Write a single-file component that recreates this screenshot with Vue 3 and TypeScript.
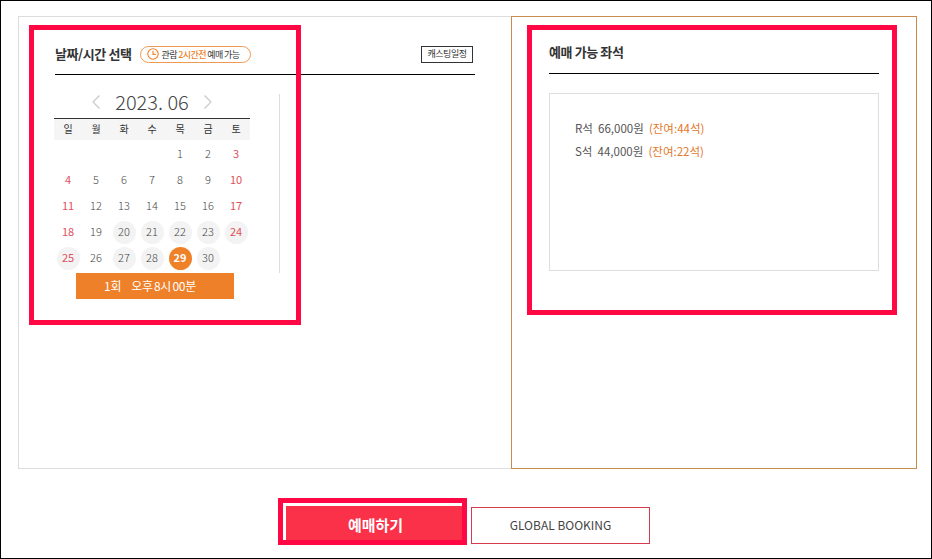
<script setup lang="ts">
interface DayCell {
  id: number
  label: string
  weekend: boolean
  open: boolean
  selected: boolean
}

const weekdays = ['일', '월', '화', '수', '목', '금', '토']
const openDays = [20, 21, 22, 23, 24, 25, 27, 28, 30]
const selectedDay = 29

// June 2023 starts on a Thursday
const days: DayCell[] = Array.from({ length: 35 }, (_, index) => {
  const day = index - 3
  const valid = day >= 1 && day <= 30
  return {
    id: index,
    label: valid ? String(day) : '',
    weekend: index % 7 === 0 || index % 7 === 6,
    open: openDays.includes(day),
    selected: day === selectedDay,
  }
})

const seats = [
  { name: 'R석', price: '66,000원', left: '(잔여:44석)' },
  { name: 'S석', price: '44,000원', left: '(잔여:22석)' },
]
</script>

<template>
  <div class="page">
    <div class="panels">
      <section class="panel-date">
        <header class="section-head">
          <h2>날짜/시간 선택</h2>
          <span class="notice">
            <svg width="12" height="12" viewBox="0 0 12 12" fill="none" stroke="#ef8129">
              <circle cx="6" cy="6" r="5.2" stroke-width="1.1" />
              <path d="M6 2.8V6.4H8.8" stroke-width="1.1" />
            </svg>
            <span>관람 <b>2시간전</b> 예매 가능</span>
          </span>
          <span class="cast-btn">캐스팅일정</span>
        </header>

        <div class="date-body">
          <div class="calendar">
            <div class="month-nav">
              <svg width="10" height="16" viewBox="0 0 10 16" fill="none" stroke="#c9c9c9" stroke-width="1.2">
                <path d="M8.5 1.5L2 8L8.5 14.5" />
              </svg>
              <span class="month">2023. 06</span>
              <svg width="10" height="16" viewBox="0 0 10 16" fill="none" stroke="#c9c9c9" stroke-width="1.2">
                <path d="M1.5 1.5L8 8L1.5 14.5" />
              </svg>
            </div>
            <div class="weekdays">
              <span v-for="name in weekdays" :key="name">{{ name }}</span>
            </div>
            <div class="days">
              <div v-for="cell in days" :key="cell.id" class="day">
                <span
                  v-if="cell.label"
                  class="day-num"
                  :class="{ weekend: cell.weekend, open: cell.open, selected: cell.selected }"
                >{{ cell.label }}</span>
              </div>
            </div>
          </div>
          <div class="divider"></div>
        </div>

        <div class="time-bar">
          <span>1회</span>
          <span>오후 8시 00분</span>
        </div>
      </section>

      <section class="panel-seat">
        <header class="section-head">
          <h2>예매 가능 좌석</h2>
        </header>
        <div class="seat-box">
          <p v-for="seat in seats" :key="seat.name" class="seat-row">
            {{ seat.name }}&nbsp; {{ seat.price }} &nbsp;<span>{{ seat.left }}</span>
          </p>
        </div>
      </section>
    </div>

    <div class="actions">
      <button class="btn-book" type="button">예매하기</button>
      <button class="btn-global" type="button">GLOBAL BOOKING</button>
    </div>

    <!-- red marker frames drawn over the screenshot -->
    <div class="marker marker-date"></div>
    <div class="marker marker-seat"></div>
    <div class="marker marker-book"></div>
  </div>
</template>

<style>
html,
body {
  margin: 0;
  background: #fff;
}
</style>

<style scoped>
.page {
  position: relative;
  box-sizing: border-box;
  width: 932px;
  height: 559px;
  padding: 15px 14px 0 17px;
  border: 1px solid #000;
  background: #fff;
  font-family: "Noto Sans CJK KR", "Noto Sans", sans-serif;
  color: #444;
  overflow: hidden;
}

.panels {
  display: flex;
  height: 453px;
}

.panel-date {
  box-sizing: border-box;
  width: 493px;
  padding: 0 36px;
  border: 1px solid #ddd;
  border-right: 0;
}

.panel-seat {
  box-sizing: border-box;
  width: 406px;
  padding: 0 37px;
  border: 1px solid #c98b4e;
}

.section-head {
  display: flex;
  align-items: center;
  box-sizing: border-box;
  height: 58px;
  padding-top: 17px;
  border-bottom: 1px solid #000;
}

.panel-seat .section-head {
  height: 57px;
  padding-top: 15px;
}

.section-head h2 {
  margin: -2px 0 0;
  font-size: 13px;
  font-weight: 700;
  letter-spacing: -0.4px;
  color: #333;
}

.notice {
  display: flex;
  align-items: center;
  gap: 3px;
  box-sizing: border-box;
  height: 17px;
  margin-left: 8px;
  padding: 0 11px 0 6px;
  border: 1px solid #ef9a52;
  border-radius: 9px;
  font-size: 9px;
  letter-spacing: -0.6px;
  color: #333;
}

.notice b {
  font-weight: 500;
  color: #ef8129;
}

.cast-btn {
  box-sizing: border-box;
  width: 52px;
  height: 17px;
  margin-left: auto;
  margin-right: 2px;
  border: 1px solid #333;
  font-size: 9px;
  line-height: 14px;
  text-align: center;
  letter-spacing: -0.5px;
  color: #333;
}

.date-body {
  display: flex;
  box-sizing: border-box;
  height: 198px;
  padding-top: 19px;
}

.calendar {
  width: 196px;
  margin-left: -1px;
}

.month-nav {
  display: flex;
  align-items: center;
  justify-content: center;
  gap: 14px;
  height: 24px;
  margin: -4px 0 4px;
}

.month {
  font-size: 20px;
  font-weight: 300;
  line-height: 24px;
  color: #444;
}

.weekdays {
  display: grid;
  grid-template-columns: repeat(7, 28px);
  height: 21px;
  border-top: 1px solid #333;
  background: #f5f5f5;
  font-size: 10px;
  line-height: 20px;
  text-align: center;
  color: #333;
}

.days {
  display: grid;
  grid-template-columns: repeat(7, 28px);
  grid-auto-rows: 26px;
  padding-top: 1px;
}

.day {
  display: flex;
  align-items: center;
  justify-content: center;
}

.day-num {
  width: 23px;
  height: 23px;
  border-radius: 50%;
  font-size: 11px;
  font-weight: 300;
  line-height: 21px;
  text-align: center;
  color: #444;
}

.day-num.weekend {
  font-weight: 400;
  color: #e0505c;
}

.day-num.open {
  background: #f3f3f3;
}

.day-num.selected {
  background: #ef8129;
  font-weight: 700;
  color: #fff;
}

.divider {
  width: 1px;
  height: 179px;
  margin-left: 29px;
  background: #ddd;
}

.time-bar {
  display: flex;
  justify-content: center;
  gap: 10px;
  box-sizing: border-box;
  width: 158px;
  height: 26px;
  margin-left: 21px;
  padding-right: 10px;
  background: #ee8029;
  font-size: 12px;
  line-height: 26px;
  letter-spacing: -0.3px;
  word-spacing: -1px;
  color: #fff;
}

.seat-box {
  box-sizing: border-box;
  height: 178px;
  margin-top: 19px;
  padding: 23px 25px;
  border: 1px solid #ddd;
}

.seat-row {
  margin: 0;
  font-size: 11.5px;
  line-height: 23px;
  color: #555;
}

.seat-row span {
  color: #e2782a;
}

.actions {
  display: flex;
  align-items: flex-end;
  gap: 6px;
  margin: 35px 0 0 266px;
}

.btn-book,
.btn-global {
  box-sizing: border-box;
  height: 37px;
  padding: 0 0 2px;
  font-family: inherit;
}

.btn-book {
  width: 181px;
  height: 40px;
  border: 0;
  border-top: 2px solid #fff;
  border-left: 2px solid #fff;
  background: #fb3049;
  font-size: 15px;
  font-weight: 700;
  color: #fff;
}

.btn-global {
  width: 179px;
  border: 1px solid #d43c4c;
  background: #fff;
  font-size: 12px;
  color: #444;
}

.marker {
  position: absolute;
  box-sizing: border-box;
  border: 5px solid #ff0844;
}

.marker-date {
  left: 28px;
  top: 24px;
  width: 272px;
  height: 300px;
}

.marker-seat {
  left: 526px;
  top: 24px;
  width: 370px;
  height: 290px;
}

.marker-book {
  left: 277px;
  top: 497px;
  width: 189px;
  height: 47px;
}
</style>
